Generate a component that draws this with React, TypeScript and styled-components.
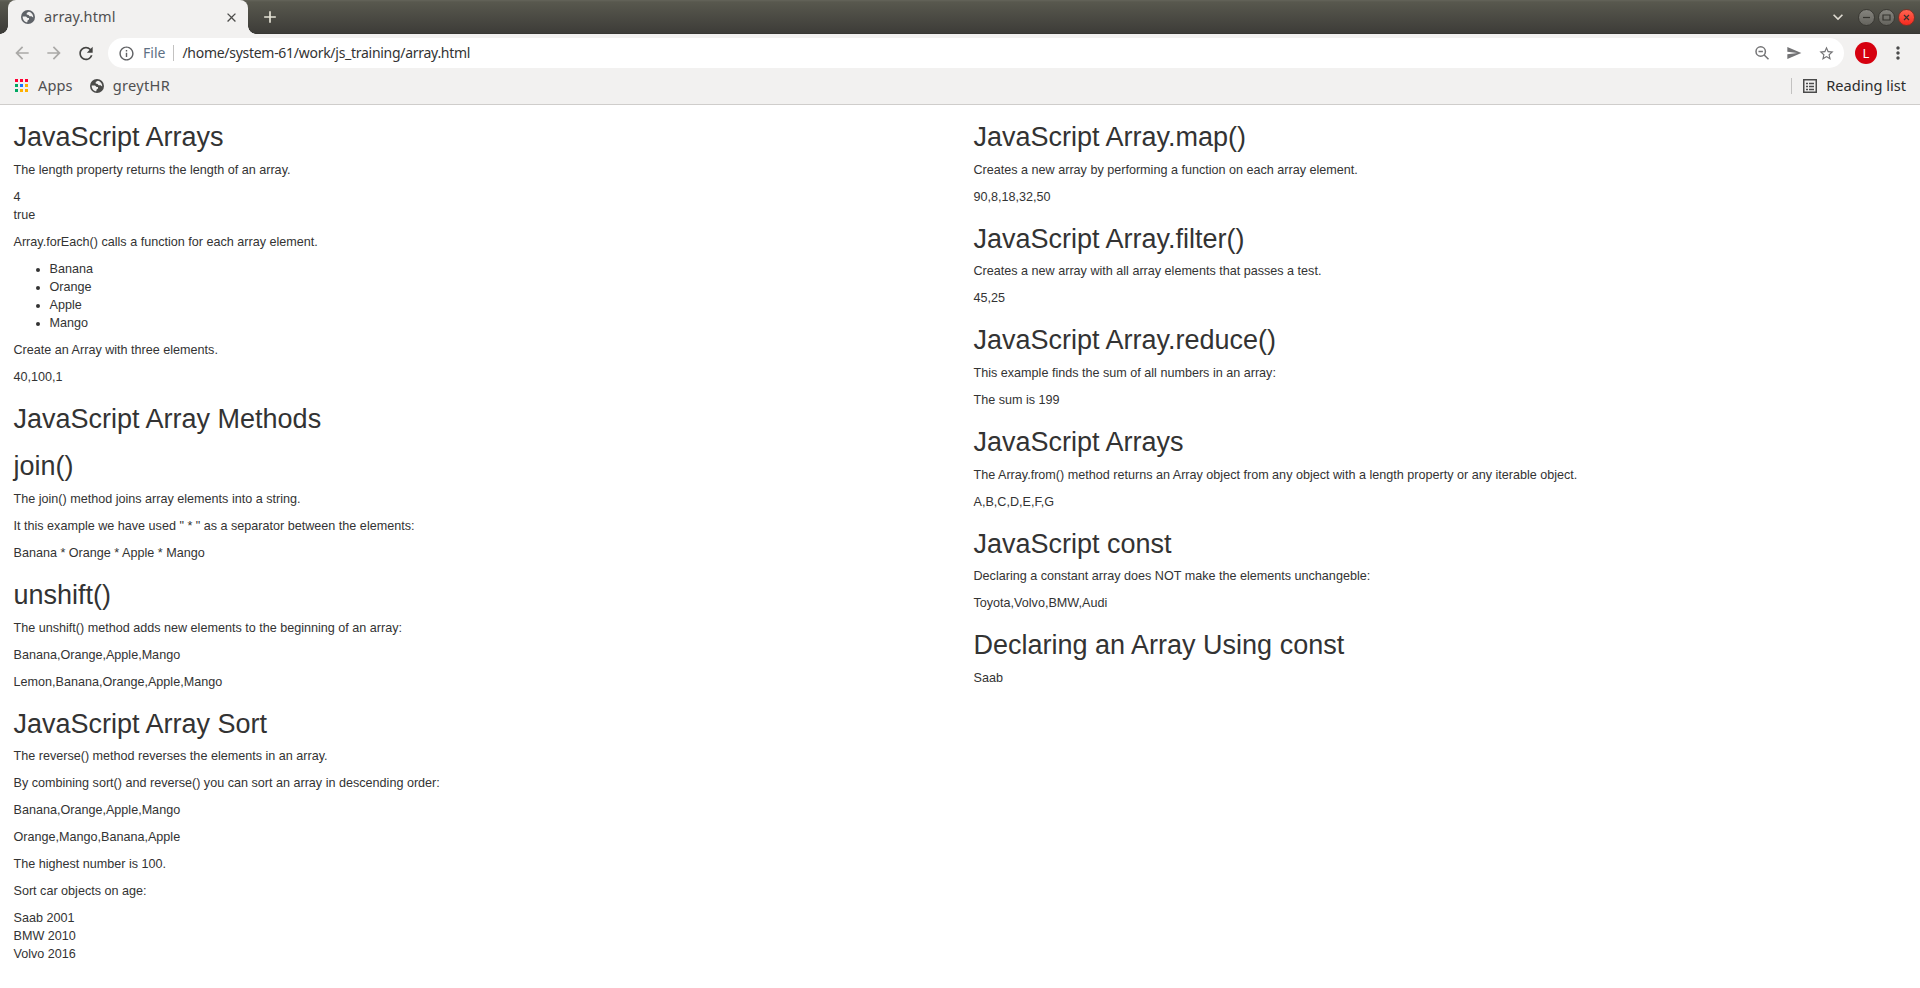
import React from "react";
import styled, { createGlobalStyle } from "styled-components";
import { MdArrowBack, MdArrowForward, MdRefresh, MdInfoOutline, MdSend, MdStarBorder, MdMoreVert, MdClose, MdAdd, MdExpandMore } from "react-icons/md";

const GlobalStyle = createGlobalStyle`
  *, *::before, *::after { box-sizing: border-box; }
  body { margin: 0; background: #fff; overflow: hidden; }
`;

const Window = styled.div`
  display: flex;
  flex-direction: column;
  height: 988px;
  overflow: hidden;
  font-family: "Noto Sans", "Open Sans", sans-serif;
`;

const TitleBar = styled.div`
  display: flex;
  align-items: stretch;
  height: 34px;
  padding: 0 5px 0 8px;
  background: linear-gradient(#64645a 0, #58584e 2px, #3d3c38 33px, #33322e 34px);
`;

const Tab = styled.div`
  display: flex;
  align-items: center;
  position: relative;
  width: 240px;
  padding: 0 9px 0 13px;
  background: #f2f1f0;
  border-radius: 8px 8px 0 0;
  color: #4c4c4a;
  &::before, &::after {
    content: "";
    position: absolute;
    bottom: 0;
    width: 8px;
    height: 8px;
  }
  &::before { left: -8px; background: radial-gradient(circle at 0 0, transparent 7.5px, #f2f1f0 8px); }
  &::after { right: -8px; background: radial-gradient(circle at 100% 0, transparent 7.5px, #f2f1f0 8px); }
`;

const Label = styled.span<{ $size?: number; $spacing?: number; $color?: string }>`
  font-size: ${(p) => p.$size ?? 14}px;
  letter-spacing: ${(p) => p.$spacing ?? 0}px;
  color: ${(p) => p.$color ?? "#505050"};
  line-height: 20px;
  white-space: nowrap;
`;

const TabTitle = styled(Label)`
  flex: 1;
  margin: 0 0 2px 9px;
`;

const NewTab = styled.div`
  display: flex;
  align-items: center;
  margin-left: 12px;
  color: #e5e3d6;
`;

const WindowControls = styled.div`
  display: flex;
  align-items: center;
  gap: 3px;
  margin-left: auto;
`;

const TabSearch = styled.div`
  display: flex;
  margin-right: 7px;
  color: #dfdbd2;
`;

const WindowButton = styled.div<{ $close?: boolean }>`
  display: flex;
  width: 17px;
  height: 17px;
  border-radius: 50%;
  border: 1px solid ${(p) => (p.$close ? "#7c3226" : "#3a3934")};
  background: ${(p) => (p.$close ? "linear-gradient(#ff6450, #f6291e)" : "linear-gradient(#85847e, #65645e)")};
`;

const Toolbar = styled.div`
  display: flex;
  align-items: center;
  height: 38px;
  padding: 0 12px;
  background: #f2f1f0;
`;

const NavButton = styled.div<{ $disabled?: boolean }>`
  display: flex;
  justify-content: center;
  width: 20px;
  margin-right: 12px;
  color: ${(p) => (p.$disabled ? "#aaa9a7" : "#444442")};
`;

const AddressBar = styled.div`
  display: flex;
  align-items: center;
  flex: 1;
  height: 30px;
  padding: 0 9px 0 10px;
  border-radius: 15px;
  background: #fff;
  color: #5f6063;
`;

const Scheme = styled(Label)`
  margin-left: 8px;
`;

const Divider = styled.div<{ $gap: number }>`
  width: 1px;
  height: 16px;
  margin: 0 ${(p) => p.$gap}px;
  background: #c3c2c1;
`;

const AddressActions = styled.div`
  display: flex;
  align-items: center;
  gap: 16px;
  margin-left: auto;
  color: #737375;
`;

const Avatar = styled.div`
  display: flex;
  align-items: center;
  justify-content: center;
  width: 22px;
  height: 22px;
  margin: 0 11px;
  border-radius: 50%;
  background: #d6000f;
  color: #fff;
  font: 13px "Noto Sans", sans-serif;
`;

const Menu = styled.div`
  display: flex;
  color: #4b4b4b;
`;

const Bookmarks = styled.div`
  display: flex;
  align-items: center;
  height: 33px;
  padding: 0 14px 4px 14px;
  background: #f2f1f0;
  border-bottom: 1px solid #cfcdcb;
`;

const Bookmark = styled.div<{ $gap: number; $after?: number }>`
  display: flex;
  align-items: center;
  gap: ${(p) => p.$gap}px;
  margin-right: ${(p) => p.$after ?? 0}px;
  color: #4b4b49;
`;

const BookmarkLabel = styled(Label)`
  margin-bottom: 2px;
`;

const ReadingList = styled.div`
  display: flex;
  align-items: center;
  margin-left: auto;
`;

const ReadingLabel = styled(BookmarkLabel)`
  margin-left: 9px;
`;

const Page = styled.main`
  display: grid;
  grid-template-columns: 1fr 1fr;
  font-family: "Liberation Sans", Arial, sans-serif;
  font-size: 12.6px;
  line-height: 1.42857143;
  color: #333;
`;

const Column = styled.div`
  padding: 0 13.5px;
`;

const Heading = styled.h2`
  margin: 18px 0 9px;
  font-size: 27px;
  font-weight: 500;
  line-height: 1.1;
`;

const Text = styled.p`
  margin: 0 0 9px;
`;

const List = styled.ul`
  margin: 0 0 9px;
  padding-left: 36px;
`;

const Globe = ({ color }: { color?: string }) => (
  <svg width="14" height="14" viewBox="0 0 14 14">
    <circle cx="7" cy="7" r="7" fill={color ?? "currentColor"} />
    <path d="M7.800 1.700 5.700 3v1.500l1.900.4 1 1.300h1.900l1.700 1.300c.3-2.500-1.500-5.200-4.400-5.800ZM1.700 6.400h3.300l1.600 1.500h1.400v1.600l-1.400 1-.3 1.800C3.600 12 1.400 9.300 1.700 6.400Z" fill="#f2f1f0" />
  </svg>
);

const appColors = ["#f03", "#f03", "#f03", "#00a862", "#1a73ff", "#ffb000", "#00a862", "#ffb000", "#ffb000"];

const AppsIcon = () => (
  <svg width="14" height="14" viewBox="0 0 14 14">
    {appColors.map((c, i) => (
      <rect key={i} x={1 + (i % 3) * 5} y={Math.floor(i / 3) * 5} width="3" height="3" fill={c} />
    ))}
  </svg>
);

const ZoomOutIcon = () => (
  <svg width="16" height="16" viewBox="0 0 16 16" fill="none" stroke="currentColor" strokeWidth="1.500">
    <circle cx="6.700" cy="6.500" r="4.700" />
    <path d="M10.200 10l4.300 4.300M4.500 6.500h4.400" />
  </svg>
);

const ReadingIcon = () => (
  <svg width="14" height="14" viewBox="0 0 14 14" fill="none" stroke="#4b4b4b">
    <rect x=".75" y=".75" width="12.500" height="12.500" strokeWidth="1.500" />
    <path d="M3 4.500h2M3 7.500h2M3 10.500h2M6 4.500h5M6 7.500h5M6 10.500h5" strokeWidth="1.300" />
  </svg>
);

const ControlGlyph = ({ d }: { d: string }) => (
  <svg width="15" height="15" viewBox="0 0 15 15" fill="none" stroke="#35342f" strokeWidth="1.200">
    <path d={d} />
  </svg>
);

type Block = string | string[] | { h: string } | { list: string[] };

const left: Block[] = [
  { h: "JavaScript Arrays" },
  "The length property returns the length of an array.",
  ["4", "true"],
  "Array.forEach() calls a function for each array element.",
  { list: ["Banana", "Orange", "Apple", "Mango"] },
  "Create an Array with three elements.",
  "40,100,1",
  { h: "JavaScript Array Methods" },
  { h: "join()" },
  "The join() method joins array elements into a string.",
  'It this example we have used " * " as a separator between the elements:',
  "Banana * Orange * Apple * Mango",
  { h: "unshift()" },
  "The unshift() method adds new elements to the beginning of an array:",
  "Banana,Orange,Apple,Mango",
  "Lemon,Banana,Orange,Apple,Mango",
  { h: "JavaScript Array Sort" },
  "The reverse() method reverses the elements in an array.",
  "By combining sort() and reverse() you can sort an array in descending order:",
  "Banana,Orange,Apple,Mango",
  "Orange,Mango,Banana,Apple",
  "The highest number is 100.",
  "Sort car objects on age:",
  ["Saab 2001", "BMW 2010", "Volvo 2016"],
];

const right: Block[] = [
  { h: "JavaScript Array.map()" },
  "Creates a new array by performing a function on each array element.",
  "90,8,18,32,50",
  { h: "JavaScript Array.filter()" },
  "Creates a new array with all array elements that passes a test.",
  "45,25",
  { h: "JavaScript Array.reduce()" },
  "This example finds the sum of all numbers in an array:",
  "The sum is 199",
  { h: "JavaScript Arrays" },
  "The Array.from() method returns an Array object from any object with a length property or any iterable object.",
  "A,B,C,D,E,F,G",
  { h: "JavaScript const" },
  "Declaring a constant array does NOT make the elements unchangeble:",
  "Toyota,Volvo,BMW,Audi",
  { h: "Declaring an Array Using const" },
  "Saab",
];

const Blocks = ({ items }: { items: Block[] }) => (
  <Column>
    {items.map((b, i) => {
      if (typeof b === "string") return <Text key={i}>{b}</Text>;
      if (Array.isArray(b))
        return (
          <Text key={i}>
            {b.map((line) => (
              <React.Fragment key={line}>
                {line}
                <br />
              </React.Fragment>
            ))}
          </Text>
        );
      if ("h" in b) return <Heading key={i}>{b.h}</Heading>;
      return (
        <List key={i}>
          {b.list.map((item) => (
            <li key={item}>{item}</li>
          ))}
        </List>
      );
    })}
  </Column>
);

export default function App() {
  return (
    <Window>
      <GlobalStyle />
      <TitleBar>
        <Tab>
          <Globe color="#5f6368" />
          <TabTitle $size={14.5} $spacing={0.15}>array.html</TabTitle>
          <MdClose size={15} />
        </Tab>
        <NewTab>
          <MdAdd size={20} />
        </NewTab>
        <WindowControls>
          <TabSearch>
            <MdExpandMore size={20} />
          </TabSearch>
          <WindowButton>
            <ControlGlyph d="M4 7.500h7" />
          </WindowButton>
          <WindowButton>
            <ControlGlyph d="M4 5h7v5h-7z" />
          </WindowButton>
          <WindowButton $close>
            <ControlGlyph d="M5 5l5 5M10 5l-5 5" />
          </WindowButton>
        </WindowControls>
      </TitleBar>
      <Toolbar>
        <NavButton $disabled>
          <MdArrowBack size={20} />
        </NavButton>
        <NavButton $disabled>
          <MdArrowForward size={20} />
        </NavButton>
        <NavButton>
          <MdRefresh size={21} />
        </NavButton>
        <AddressBar>
          <MdInfoOutline size={17} />
          <Scheme $color="#5e7084">File</Scheme>
          <Divider $gap={8} />
          <Label $color="#333333" $spacing={-0.28}>/home/system-61/work/js_training/array.html</Label>
          <AddressActions>
            <ZoomOutIcon />
            <MdSend size={16} />
            <MdStarBorder size={17} />
          </AddressActions>
        </AddressBar>
        <Avatar>L</Avatar>
        <Menu>
          <MdMoreVert size={20} />
        </Menu>
      </Toolbar>
      <Bookmarks>
        <Bookmark $gap={10} $after={17}>
          <AppsIcon />
          <BookmarkLabel $size={14.6} $spacing={0.1}>Apps</BookmarkLabel>
        </Bookmark>
        <Bookmark $gap={9}>
          <Globe />
          <BookmarkLabel $size={14.6} $spacing={0.3}>greytHR</BookmarkLabel>
        </Bookmark>
        <ReadingList>
          <Divider $gap={11} />
          <ReadingIcon />
          <ReadingLabel $size={14.6} $color="#2c2c2c">Reading list</ReadingLabel>
        </ReadingList>
      </Bookmarks>
      <Page>
        <Blocks items={left} />
        <Blocks items={right} />
      </Page>
    </Window>
  );
}
